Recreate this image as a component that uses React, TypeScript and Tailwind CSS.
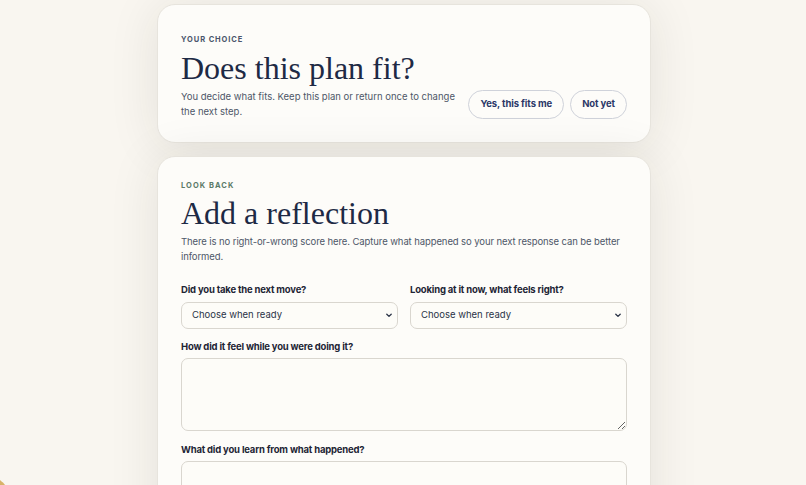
import React from "react";

const sans = { fontFamily: "Inter, 'Noto Sans', sans-serif" };
const serif = { fontFamily: "'Liberation Serif', Georgia, serif" };

function Select() {
  return (
    <div className="relative">
      <select
        className="block h-[27px] w-full appearance-none rounded-[7px] border border-[#d9d6cf] bg-[#fdfcf8] pl-[10px] pr-[20px] text-[9.5px] text-[#2a3347] outline-none"
        style={sans}
        defaultValue=""
      >
        <option value="">Choose when ready</option>
      </select>
      <svg
        className="pointer-events-none absolute right-[6px] top-[11px]"
        width="6"
        height="5"
        viewBox="0 0 6 5"
        fill="none"
      >
        <path d="M0.8 1.2 L3 3.4 L5.2 1.2" stroke="#2a3347" strokeWidth="1.3" strokeLinecap="round" strokeLinejoin="round" />
      </svg>
    </div>
  );
}

const label = "text-[9.5px] font-bold leading-[14px] tracking-[-0.02em] text-[#1e2535]";

export default function App() {
  return (
    <div className="relative h-[485px] w-[806px] overflow-hidden bg-[#f9f6f0]" style={sans}>
      <div className="ml-[157px] flex w-[494px] flex-col gap-[13px] pt-[4px]">
        <section className="rounded-[18px] border border-[#e7e4dd] bg-[#fdfcf9] px-[23px] pb-[23px] pt-[30px] shadow-[0_4px_50px_rgba(40,35,25,0.10)]">
          <div className="text-[7.5px] font-bold leading-[10px] tracking-[0.12em] text-[#4a556b]">YOUR CHOICE</div>
          <h1 className="mt-[4px] text-[32px] leading-[38px] text-[#1e2a45]" style={serif}>
            Does this plan fit?
          </h1>
          <div className="mt-[2px] flex items-end justify-between gap-[8px]">
            <p className="max-w-[285px] flex-1 text-[9.5px] leading-[15px] text-[#4d5768]">
              You decide what fits. Keep this plan or return once to change the next step.
            </p>
            <div className="flex shrink-0 gap-[6px]">
              <button className="h-[29px] whitespace-nowrap rounded-full border border-[#cfd2da] bg-[#fdfcf9] px-[11px] text-[9.5px] font-bold tracking-[-0.01em] text-[#2b3767]">
                Yes, this fits me
              </button>
              <button className="h-[29px] whitespace-nowrap rounded-full border border-[#cfd2da] bg-[#fdfcf9] px-[11px] text-[9.5px] font-bold tracking-[-0.01em] text-[#2b3767]">
                Not yet
              </button>
            </div>
          </div>
        </section>

        <section className="rounded-[18px] border border-[#e7e4dd] bg-[#fdfcf9] px-[23px] pb-[24px] pt-[24px] shadow-[0_4px_50px_rgba(40,35,25,0.10)]">
          <div className="text-[7.5px] font-bold leading-[10px] tracking-[0.14em] text-[#5b7a68]">LOOK BACK</div>
          <h2 className="mt-[3px] text-[32px] leading-[38px] text-[#1e2a45]" style={serif}>
            Add a reflection
          </h2>
          <p className="mt-[2px] text-[9.5px] leading-[15px] tracking-[-0.01em] text-[#4d5768]">
            There is no right-or-wrong score here. Capture what happened so your next response can be better informed.
          </p>
          <div className="mt-[19px] grid grid-cols-2 gap-x-[12px]">
            <label className="flex flex-col gap-[5px]">
              <span className={label}>Did you take the next move?</span>
              <Select />
            </label>
            <label className="flex flex-col gap-[5px]">
              <span className={label}>Looking at it now, what feels right?</span>
              <Select />
            </label>
          </div>
          <label className="mt-[11px] flex flex-col gap-[4px]">
            <span className={label}>How did it feel while you were doing it?</span>
            <textarea className="block h-[73px] w-full rounded-[7px] border border-[#d9d6cf] bg-[#fdfcf8] outline-none" />
          </label>
          <label className="mt-[12px] flex flex-col gap-[4px]">
            <span className={label}>What did you learn from what happened?</span>
            <textarea className="block h-[73px] w-full rounded-[7px] border border-[#d9d6cf] bg-[#fdfcf8] outline-none" />
          </label>
        </section>
      </div>
      <div className="absolute bottom-[-52px] left-[-52px] h-[64px] w-[64px] rounded-full bg-[#d8b36a]" />
    </div>
  );
}
